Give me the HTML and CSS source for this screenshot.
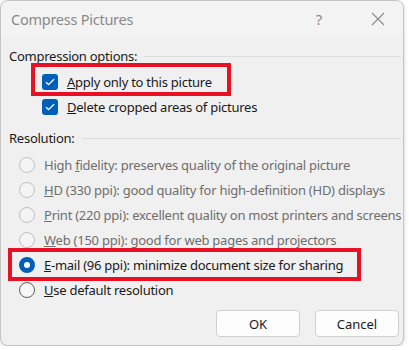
FILE: index.html
```html
<!DOCTYPE html>
<html lang="en">
<head>
    <meta charset="UTF-8">
    <meta name="viewport" content="width=device-width, initial-scale=1.0">
    <title>Compress Pictures</title>
    <link rel="stylesheet" href="styles.css">
</head>
<body>
    <div class="dialog">
        <div class="titlebar">
            <span class="title">Compress Pictures</span>
            <span class="tb-btn help">?</span>
            <span class="tb-btn close">
                <svg width="14" height="14" viewBox="0 0 14 14"><path d="M1 1L13 13M13 1L1 13" stroke="#8a8a8a" stroke-width="1.1" fill="none"/></svg>
            </span>
        </div>

        <div class="content">
            <div class="group-head">Compression options:</div>
            <div class="checks">
                <div class="row check-row marked mark-apply">
                    <span class="checkbox"><svg width="10" height="8" viewBox="0 0 10 8"><path d="M1 4.2L3.6 6.6L9 1.2" stroke="#fff" stroke-width="1.3" fill="none"/></svg></span>
                    <span><u>A</u>pply only to this picture</span>
                </div>
                <div class="row check-row">
                    <span class="checkbox"><svg width="10" height="8" viewBox="0 0 10 8"><path d="M1 4.2L3.6 6.6L9 1.2" stroke="#fff" stroke-width="1.3" fill="none"/></svg></span>
                    <span><u>D</u>elete cropped areas of pictures</span>
                </div>
            </div>

            <div class="group-head res-head">Resolution:</div>
            <div class="radios">
                <div class="row disabled"><span class="radio"></span><span>High <u>f</u>idelity: preserves quality of the original picture</span></div>
                <div class="row disabled"><span class="radio"></span><span><u>H</u>D (330 ppi): good quality for high-definition (HD) displays</span></div>
                <div class="row disabled"><span class="radio"></span><span><u>P</u>rint (220 ppi): excellent quality on most printers and screens</span></div>
                <div class="row disabled"><span class="radio"></span><span><u>W</u>eb (150 ppi): good for web pages and projectors</span></div>
                <div class="row marked mark-email"><span class="radio on"></span><span><u>E</u>-mail (96 ppi): minimize document size for sharing</span></div>
                <div class="row"><span class="radio"></span><span><u>U</u>se default resolution</span></div>
            </div>

            <div class="buttons">
                <button class="btn">OK</button>
                <button class="btn">Cancel</button>
            </div>
        </div>
    </div>
</body>
</html>
```

FILE: styles.css
```css
body {
    margin: 0;
    padding: 0;
    background: #ffffff;
    font-family: "Noto Sans", "Open Sans", sans-serif;
    font-size: 13px;
    letter-spacing: -0.25px;
    color: #1a1a1a;
}

.dialog {
    width: 404px;
    height: 346px;
    box-sizing: border-box;
    border: 1px solid #c4c4c4;
    border-radius: 8px;
    background: #f0f0f0;
    overflow: hidden;
    box-shadow: 0 1px 4px rgba(0,0,0,0.18);
}

.titlebar {
    height: 35px;
    background: #f3f3f3;
    display: flex;
    align-items: center;
    padding-left: 10px;
}

.title {
    flex: 1;
    font-size: 14.5px;
    color: #8a8a8a;
}

.tb-btn {
    display: flex;
    align-items: center;
    justify-content: center;
    color: #8a8a8a;
}

.help {
    width: 16px;
    font-size: 15px;
    margin-right: 44px;
}

.close {
    width: 14px;
    margin-right: 18px;
}

.content {
    padding: 10px 0 0 8px;
}

/* заголовок группы с линией */
.group-head {
    display: flex;
    align-items: center;
    height: 20px;
    gap: 7px;
}

.group-head::after {
    content: '';
    flex: 1;
    height: 1px;
    background: #dcdcdc;
    margin-right: 2px;
}

.checks {
    padding: 3px 0 0 33px;
}

.row {
    display: flex;
    align-items: center;
    height: 25px;
    gap: 9px;
    position: relative;
    white-space: nowrap;
}

.check-row {
    width: fit-content;
}

.checkbox {
    width: 16px;
    height: 16px;
    border-radius: 3px;
    background: #005fb8;
    display: flex;
    align-items: center;
    justify-content: center;
}

.res-head {
    margin-top: 9px;
}

.radios {
    padding: 4px 0 0 10px;
}

.radio {
    width: 16px;
    height: 16px;
    box-sizing: border-box;
    border-radius: 50%;
    border: 1px solid #5f5f5f;
    background: #f7f7f7;
    flex: none;
}

.disabled {
    color: #6e6e6e;
}

.disabled .radio {
    border-color: #c0c0c0;
    background: #f4f4f4;
}

.radio.on {
    border: 5px solid #005fb8;
    background: #ffffff;
}

/* красные рамки выделения */
.marked::after {
    content: '';
    position: absolute;
    border: 4px solid #e81123;
    pointer-events: none;
}

.mark-apply::after {
    left: -11px;
    right: -19px;
    top: -6px;
    bottom: -2px;
}

.mark-email::after {
    left: -11px;
    width: 345px;
    top: -4px;
    bottom: -4px;
}

.buttons {
    display: flex;
    justify-content: flex-end;
    gap: 15px;
    padding: 8px 4px 0 0;
}

.btn {
    width: 84px;
    height: 27px;
    background: #fdfdfd;
    border: 1px solid #d0d0d0;
    border-radius: 4px;
    font-family: inherit;
    font-size: 13px;
    color: #1a1a1a;
}
```
